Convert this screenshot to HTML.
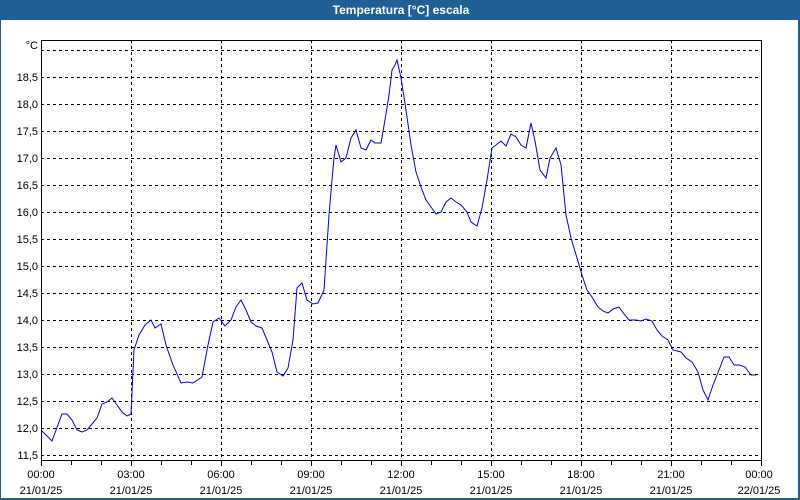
<!DOCTYPE html>
<html><head><meta charset="utf-8"><style>
html,body{margin:0;padding:0;background:#fff}
.w{position:relative;width:800px;height:500px;overflow:hidden;background:#fefffe;box-sizing:border-box;border-left:1px solid #1f5f95;border-right:2px solid #1f5f95;border-bottom:2px solid #1f5f95}
.t{position:absolute;left:0;top:0;width:800px;height:20px;background:#1f5f95;color:#fff;font:bold 12px "Liberation Sans",sans-serif;text-align:center;line-height:21px}
svg{position:absolute;left:0;top:0}
text{font-family:"Liberation Sans",sans-serif;font-size:11px;fill:#000}
</style></head><body><div class="w"><div class="t">Temperatura [°C] escala</div>
<svg width="800" height="500">
<g stroke="#000" stroke-dasharray="3,3" stroke-width="1">
<path d="M40 50.5H760M40 77.5H760M40 104.5H760M40 131.5H760M40 158.5H760M40 185.5H760M40 212.5H760M40 239.5H760M40 266.5H760M40 293.5H760M40 320.5H760M40 347.5H760M40 374.5H760M40 401.5H760M40 428.5H760M40 455.5H760"/>
<path d="M130.5 40V461M220.5 40V461M310.5 40V461M400.5 40V461M490.5 40V461M580.5 40V461M670.5 40V461"/>
</g>
<rect x="40.5" y="40.5" width="720" height="420" fill="none" stroke="#000"/>
<path stroke="#000" d="M40.5 461V466M70.5 461V465M100.5 461V465M130.5 461V466M160.5 461V465M190.5 461V465M220.5 461V466M250.5 461V465M280.5 461V465M310.5 461V466M340.5 461V465M370.5 461V465M400.5 461V466M430.5 461V465M460.5 461V465M490.5 461V466M520.5 461V465M550.5 461V465M580.5 461V466M610.5 461V465M640.5 461V465M670.5 461V466M700.5 461V465M730.5 461V465M760.5 461V466"/>
<g text-anchor="end">
<text x="37" y="49">°C</text>
<text x="37" y="81">18,5</text><text x="37" y="108">18,0</text><text x="37" y="135">17,5</text><text x="37" y="162">17,0</text><text x="37" y="189">16,5</text><text x="37" y="216">16,0</text><text x="37" y="243">15,5</text><text x="37" y="270">15,0</text><text x="37" y="297">14,5</text><text x="37" y="324">14,0</text><text x="37" y="351">13,5</text><text x="37" y="378">13,0</text><text x="37" y="405">12,5</text><text x="37" y="432">12,0</text><text x="37" y="459">11,5</text>
</g>
<g text-anchor="middle">
<text x="40" y="478">00:00</text><text x="40" y="494">21/01/25</text>
<text x="130" y="478">03:00</text><text x="130" y="494">21/01/25</text>
<text x="220" y="478">06:00</text><text x="220" y="494">21/01/25</text>
<text x="310" y="478">09:00</text><text x="310" y="494">21/01/25</text>
<text x="400" y="478">12:00</text><text x="400" y="494">21/01/25</text>
<text x="490" y="478">15:00</text><text x="490" y="494">21/01/25</text>
<text x="580" y="478">18:00</text><text x="580" y="494">21/01/25</text>
<text x="670" y="478">21:00</text><text x="670" y="494">21/01/25</text>
<text x="758" y="478">00:00</text><text x="758" y="494">22/01/25</text>
</g>
<polyline fill="none" stroke="#0000ee" stroke-width="1" points="41,431 51,441 61,414 66,414 71,420 76,430 81,432 86,430 91,424 96,418 101,404 106,402 111,398 116,405 121,412 126,416 130,414 133,350 138,335 144,325 150,320 154,328 160,324 165,345 172,365 180,383 186,382 192,383 201,377 207,345 212,322 218,318 224,326 230,320 235,307 240,300 245,310 250,322 255,326 261,328 266,340 271,352 276,372 282,376 287,368 292,340 296,288 301,283 306,300 312,304 317,303 323,290 328,215 331,180 333,158 335,145 340,162 345,158 350,138 355,130 360,148 365,150 370,140 374,143 380,143 384,120 388,95 391,70 394,65 396,60 400,78 405,110 410,145 415,172 420,187 425,200 430,207 435,214 440,212 445,202 450,198 455,202 460,205 466,212 470,222 476,226 481,208 486,180 491,148 495,145 500,141 505,146 510,134 515,137 520,145 525,148 530,123 534,141 539,170 545,178 549,158 555,148 560,165 565,215 570,238 576,258 581,275 586,290 591,297 597,307 602,311 607,313 612,309 618,307 623,314 628,320 635,320 640,321 645,319 651,321 656,330 661,336 667,340 672,350 680,352 685,358 691,362 697,372 702,390 707,400 712,385 718,370 723,357 728,357 733,365 738,365 744,367 750,375 755,375"/>
</svg></div></body></html>
